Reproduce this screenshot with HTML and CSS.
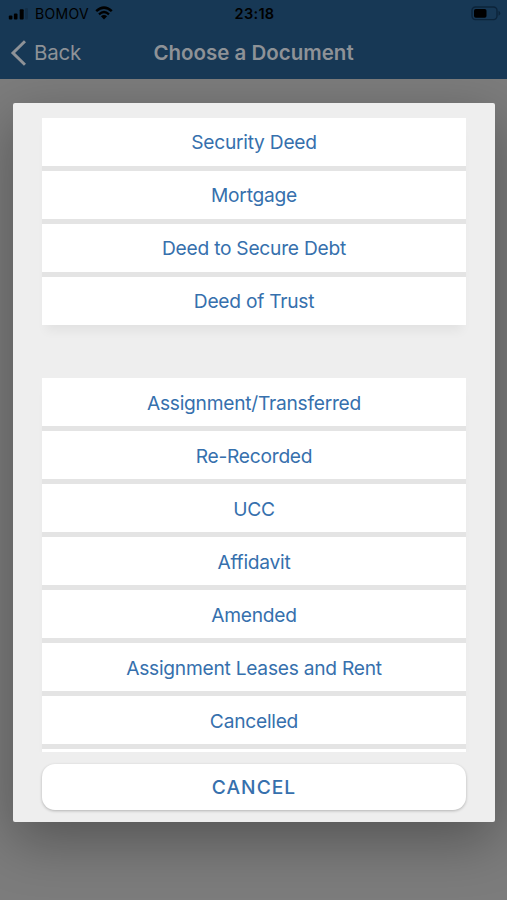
FILE: index.html
```html
<!DOCTYPE html>
<html lang="en">
<head>
  <meta charset="UTF-8" />
  <meta name="viewport" content="width=device-width, initial-scale=1.0" />
  <title>Choose a Document</title>
  <link rel="stylesheet" href="styles.css">
</head>
<body>
  <header>
    <div class="status-bar">
      <div class="carrier">
        <svg class="signal" width="20" height="12" viewBox="0 0 20 12">
          <rect x="0.8" y="7.5" width="3.6" height="4" rx="1" />
          <rect x="5.9" y="5.5" width="3.6" height="6" rx="1" />
          <rect x="11.7" y="1.2" width="4" height="10.3" rx="1" />
          <rect x="17" y="0" width="3" height="11.5" rx="1" opacity="0.15" />
        </svg>
        <span>BOMOV</span>
        <svg class="wifi" width="18" height="14" viewBox="0 0 18 14">
          <path d="M1.2 5.2Q9 -2 16.8 5.2" fill="none" stroke="#000" stroke-width="2.5" />
          <path d="M4 8.3Q9 3.7 14 8.3" fill="none" stroke="#000" stroke-width="2.3" />
          <path d="M5.9 10.3Q9 7.5 12.1 10.3L9 13.5Z" />
        </svg>
      </div>
      <div class="time">23:18</div>
      <svg class="battery" width="30" height="15" viewBox="0 0 30 15">
        <rect x="1" y="1" width="25" height="12.6" rx="3.5" fill="none" stroke="#0c243a" stroke-width="1.4" />
        <rect x="3" y="2.9" width="12.5" height="8.8" rx="1.8" />
        <path d="M27.5 4.8Q29.3 5.6 29.3 7.3T27.5 9.8Z" fill="#0c243a" />
      </svg>
    </div>
    <nav>
      <a class="back" href="#">
        <svg width="16" height="26" viewBox="0 0 16 26">
          <path d="M15 1.2L3 13L15 24.8" fill="none" stroke="#8e9297" stroke-width="3" />
        </svg>
        <span>Back</span>
      </a>
      <h1>Choose a Document</h1>
    </nav>
  </header>
  <main>
    <div class="modal">
      <div class="list">
        <div class="group">
          <button>Security Deed</button>
          <button>Mortgage</button>
          <button>Deed to Secure Debt</button>
          <button>Deed of Trust</button>
        </div>
        <div class="group">
          <button>Assignment/Transferred</button>
          <button>Re-Recorded</button>
          <button>UCC</button>
          <button>Affidavit</button>
          <button>Amended</button>
          <button>Assignment Leases and Rent</button>
          <button>Cancelled</button>
          <button></button>
        </div>
      </div>
      <button class="cancel">CANCEL</button>
    </div>
  </main>
</body>
</html>
```

FILE: styles.css
```css
* { box-sizing: border-box; }
body {
  font-family: Inter, "Liberation Sans", sans-serif;
  background: #7c7c7c;
  margin: 0;
  height: 900px;
  overflow: hidden;
}
header {
  position: relative;
  z-index: 1;
  height: 79px;
  background-color: #173855;
}
.status-bar {
  display: grid;
  grid-template-columns: 1fr auto 1fr;
  align-items: center;
  height: 27px;
  padding: 0 6px 0 8px;
}
.carrier {
  display: flex;
  align-items: center;
  font-size: 14px;
  letter-spacing: 0.3px;
}
.signal {
  margin-right: 7px;
}
.wifi {
  margin-left: 6px;
  margin-top: -2px;
}
.time {
  font-size: 14.5px;
  font-weight: 600;
  letter-spacing: 0.3px;
}
.battery {
  justify-self: end;
}
nav {
  display: grid;
  grid-template-columns: 1fr auto 1fr;
  align-items: center;
  height: 51px;
  padding: 0 10px;
  color: #8e9297;
}
.back {
  display: flex;
  align-items: center;
  gap: 8px;
  color: #8e9297;
  font-size: 20.5px;
  letter-spacing: -0.2px;
  text-decoration: none;
}
h1 {
  margin: 0;
  font-size: 20.5px;
  font-weight: 600;
}
main {
  padding: 24px 12px 0 13px;
}
.modal {
  height: 719px;
  padding: 15px 29px 0;
  background-color: #eee;
  border-radius: 2px;
  box-shadow: 0 18px 55px rgba(0, 0, 0, 0.32);
}
.list {
  height: 634px;
  margin: 0 -10px;
  padding: 0 10px;
  overflow: hidden;
}
.group {
  display: flex;
  flex-direction: column;
  gap: 5px;
  margin-bottom: 53px;
  background-color: #e4e4e4;
  border-radius: 2px;
  box-shadow: 0 10px 10px -4px rgba(0, 0, 0, 0.05);
}
button {
  flex: none;
  width: 100%;
  height: 48px;
  padding: 0;
  border: none;
  background-color: #fff;
  color: #3670ad;
  font-family: inherit;
  font-size: 19.2px;
  letter-spacing: -0.25px;
}
.group + .group button {
  padding-top: 2px;
}
.cancel {
  display: block;
  height: 46px;
  margin-top: 12px;
  border-radius: 13px;
  font-weight: 500;
  letter-spacing: 1px;
  box-shadow: 0 1px 3px rgba(0, 0, 0, 0.25);
}
```
